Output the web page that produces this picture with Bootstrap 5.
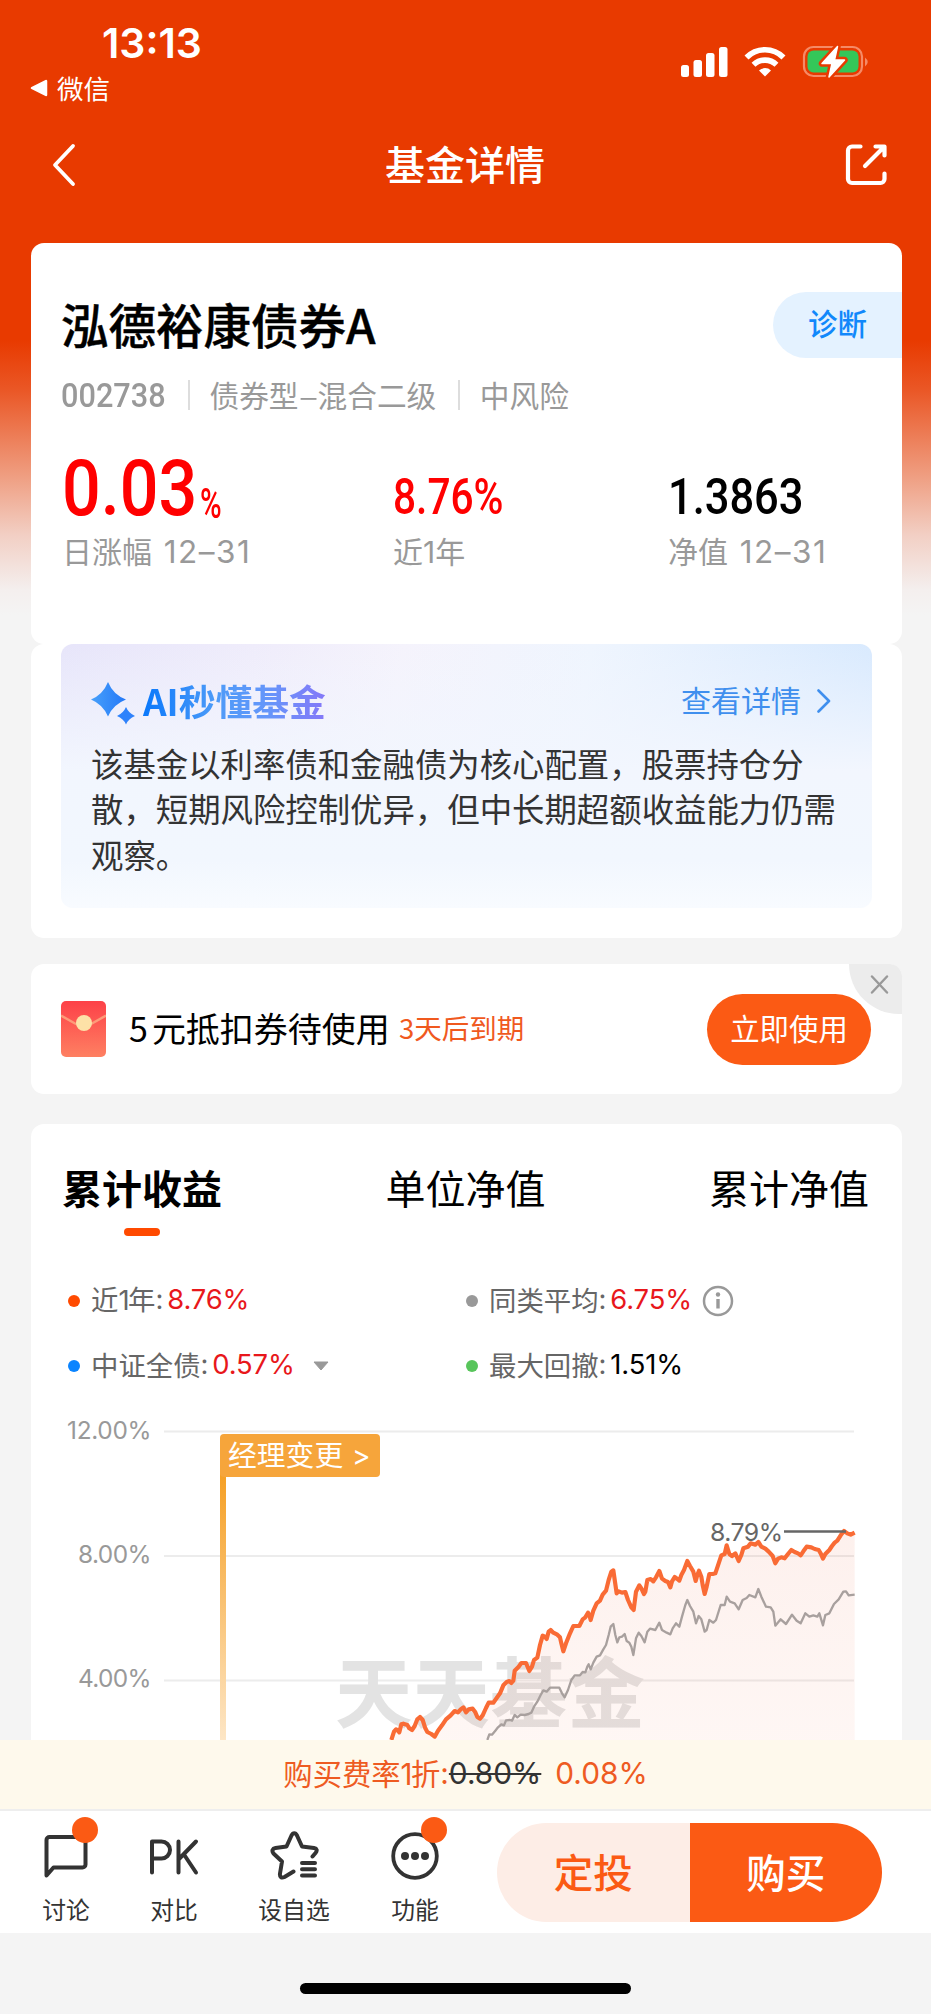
<!DOCTYPE html>
<html lang="zh-CN">
<head>
<meta charset="utf-8">
<meta name="viewport" content="width=device-width, initial-scale=1">
<title>基金详情</title>
<link href="https://cdn.jsdelivr.net/npm/bootstrap@5.3.0/dist/css/bootstrap.min.css" rel="stylesheet">
<style>
body{font-family:"Noto Sans CJK SC",sans-serif;background:#f4f4f4;color:#000;line-height:1;width:931px;height:2014px;overflow:hidden}
svg{display:block;flex:none}
.page{height:2014px;background:linear-gradient(#e83a00 0,#e83a00 340px,#ea5726 390px,#ef9d80 475px,#f2cfc4 535px,#f4efee 590px,#f4f4f4 615px)}
.num{font-family:Inter,"Noto Sans CJK SC",sans-serif}
.din{font-family:Roboto,sans-serif;display:inline-block;transform-origin:0 50%;white-space:nowrap}
.nw{white-space:nowrap}
.statusbar{height:114px;padding:21px 63px 0 30px}
.clock{font-size:41px;font-weight:600;margin-left:72px;line-height:44px}
.back-app{font-size:26.5px;gap:9px;margin-top:10px}
.status-icons{margin-top:24px}
.titlebar{height:129px;padding:0 43px 28px 52px}
.titlebar h1{font-size:40px;font-weight:500;line-height:1;margin:0 0 4px 9px}
.panel{background:#fff;border-radius:13px;margin:0 29px 0 31px;width:871px}
.summary{height:401px;padding-top:49px}
.fund-head{height:66px;padding-left:30px}
.fund-head h2{font-size:47.5px;font-weight:500;line-height:1;margin:0 0 3px;-webkit-text-stroke:.4px #000}
.diag{width:129px;height:66px;padding-bottom:5px;border-radius:33px 0 0 33px;background:#e4f2ff;color:#1188fb;font-size:29.5px;font-weight:500}
.meta{height:32px;margin-top:22px;padding:0 0 2px 30px;color:#999;font-size:29.7px}
.meta i{width:1.5px;height:30px;background:#ddd}
.code{width:127px}.code span{font-size:33px;font-weight:500;transform:scaleX(.93)}
.meta .kind{margin:0 22px 0 20px}
.meta .wide{display:inline-block;width:19px;text-align:center;transform:scaleX(1.2)}
.quotes{color:#999;font-size:30px;padding:43px 0 0 31px}
.quotes .value{height:66px}
.quotes .label{line-height:30px;margin-top:14px}
.red{color:#f00}
.q1{font-size:77.5px;font-weight:500;transform:scaleX(.88);line-height:68px;width:138px}
.q2{font-size:42px;font-weight:500;transform:scaleX(.7);vertical-align:-3px}
.q3,.q4{font-size:50.5px;font-weight:500;line-height:50px;padding-top:17px}
.q3{transform:scaleX(.805)}.q4{transform:scaleX(.86)}
.thin{font-size:31.5px;letter-spacing:1.5px;margin-left:5px}
.ai-wrap{height:294px;padding:0 30px}
.ai-box{height:264px;border-radius:12px;padding:0 30px;background:linear-gradient(rgba(255,255,255,0) 0,#f2f6fe 48%,#f2f7fe 82%,#f8fbff 100%),linear-gradient(100deg,#e7e5fa 0,#f0edfb 25%,#f5f3fc 40%,#eff5fe 62%,#d5e8fe 100%)}
.ai-head{height:118px;padding-bottom:5px}
.ai-head .spark{margin-top:4px}
.ai-name{font-size:36.8px;font-weight:700;background:linear-gradient(90deg,#0a78fb,#4d9bf8 40%,#6596fa 68%,#8578f8);-webkit-background-clip:text;background-clip:text;color:transparent;line-height:1.3}
.ai-link{color:#3f8fee;font-size:30px}
.ai-link span{margin:0 16px 3px 0}
.ai-text{font-size:32.4px;line-height:45.4px;color:#333;margin:-22px -4px 0 0}
.coupon{height:130px;margin-top:26px;padding:0 31px 0 30px}
.coupon .main-text{font-size:34px;margin:0 0 3px 23px}
.coupon .due{font-size:27.5px;color:#f0591e;margin:0 0 2px 9px}
.use-btn{width:164px;height:71px;border-radius:36px;background:#fb5a14;color:#fff;font-size:29.4px;padding-bottom:2px}
.shut{top:0;right:0;width:53px;height:50px;background:#ececec;border-radius:0 13px 0 52px;padding:0 0 9px 8px}
.chart-card{height:616px;margin-top:30px;border-radius:13px 13px 0 0}
.tabs{padding:0 33px 0 31px;height:112px;font-size:40px}
.tabs>div{padding-top:43px}
.tabs .sel{font-weight:700}
.tabs .sel:after{content:"";display:block;width:36px;height:8px;border-radius:4px;background:#ff4a00;margin:21px auto 0}
.legend-grid{height:130px;margin-top:32px;font-size:27.4px;color:#666}
.legend-grid .cell{height:65px;padding-left:37px;white-space:nowrap}
.legend-grid .cell span{margin-bottom:2px}
.legend-grid .cell.first{width:398px}
.dot{width:12px;height:12px;border-radius:50%;margin-right:11px}
.legend-grid .num{font-size:27.4px;letter-spacing:-.15px}
.legend-grid .up{color:#e8171b}
.legend-grid .val{margin-left:4px}
.one{font-family:Inter,sans-serif;letter-spacing:-1.5px}
.chart{margin-top:2px}
.fee{height:71px;padding-bottom:1px;background:#fef9ec;border-bottom:2px solid #eee;color:#ee5b22;font-size:29.3px}
.fee .num{font-size:29.8px}
.toolbar{height:122px;background:#fff;color:#333;font-size:23.8px}
.tool{width:80px;padding-top:19px}
.tool span{margin-top:17px;line-height:24px;white-space:nowrap}
.pip{width:26px;height:26px;border-radius:50%;background:#fb5a14}
.act{width:192.5px;height:99px;padding-bottom:4px;font-size:39.5px;font-weight:500;margin-top:12px}
.act.plan{background:#fdede6;color:#fb5a14;border-radius:50px 0 0 50px}
.act.buy{background:#fb5a14;color:#fff;border-radius:0 50px 50px 0}
.home{width:331px;height:11px;border-radius:6px;background:#000;margin:50px auto 0}
</style>
</head>
<body>
<div class="page d-flex flex-column">
  <header class="text-white">
    <div class="statusbar d-flex justify-content-between">
      <div>
        <div class="clock num">13:13</div>
        <div class="back-app d-flex align-items-center">
          <svg width="18" height="18" viewBox="0 0 18 18"><path d="M16 2v14L2 9z" fill="#fff" stroke="#fff" stroke-width="2.5" stroke-linejoin="round"/></svg>
          <span>微信</span>
        </div>
      </div>
      <svg class="status-icons" width="188" height="34" viewBox="680 45 188 34">
        <g fill="#fff"><rect x="681" y="65" width="8" height="12" rx="2.5"/><rect x="693.5" y="60" width="8.5" height="17" rx="2.5"/><rect x="706" y="53" width="8.5" height="24" rx="2.5"/><rect x="719" y="47" width="8.5" height="30" rx="2.5"/></g>
        <g fill="none" stroke="#fff" stroke-width="5.6"><path d="M746.500 57.500a26 26 0 0 1 37 0"/><path d="M753.500 64.800a16.500 16.500 0 0 1 23 0"/></g><path d="M765 76.500l-6-6a8.700 8.700 0 0 1 12 0z" fill="#fff"/>
        <rect x="804" y="47" width="58" height="29" rx="9.5" fill="none" stroke="#f58a66" stroke-width="2.2"/><rect x="807.5" y="50.5" width="51" height="22" rx="6" fill="#34c759"/><path d="M865 57.500q5.500 4.500 0 9z" fill="#f58a66"/>
        <path d="M837.500 46.500L822 63.500h10L829 77l15.500-17h-10z" fill="#fff" stroke="#e83a00" stroke-width="6.500" stroke-linejoin="round"/><path d="M837.500 46.500L822 63.500h10L829 77l15.500-17h-10z" fill="#fff" stroke="#fff" stroke-width="1.500" stroke-linejoin="round"/>
      </svg>
    </div>
    <div class="titlebar d-flex align-items-center justify-content-between">
      <svg width="24" height="44" viewBox="0 0 24 44" fill="none" stroke="#fff" stroke-width="3.8" stroke-linecap="round" stroke-linejoin="round"><path d="M21 3L3 22l18 19"/></svg>
      <h1>基金详情</h1>
      <svg width="43" height="43" viewBox="0 0 43 43" fill="none" stroke="#fff" stroke-width="4.2" stroke-linecap="round" stroke-linejoin="round"><path d="M15.500 3.500H7a4 4 0 0 0-4 4v28.500a4 4 0 0 0 4 4h28.500a4 4 0 0 0 4-4v-5.500M30.500 3.500h9v9M38.500 4.500L20 23"/></svg>
    </div>
  </header>

  <section class="panel summary">
    <div class="fund-head d-flex align-items-center justify-content-between">
      <h2>泓德裕康债券A</h2>
      <div class="diag d-flex align-items-center justify-content-center">诊断</div>
    </div>
    <div class="meta d-flex align-items-center nw">
      <div class="code"><span class="din">002738</span></div><i></i>
      <span class="kind">债券型<span class="wide">–</span>混合二级</span><i></i><span style="margin-left:20px">中风险</span>
    </div>
    <div class="quotes d-flex nw">
      <div style="width:331px"><div class="value red"><span class="din q1">0.03</span><span class="din q2">%</span></div><div class="label">日涨幅 <span class="num thin">12–31</span></div></div>
      <div style="width:275px"><div class="value red"><span class="din q3">8.76%</span></div><div class="label">近<span class="num">1</span>年</div></div>
      <div><div class="value text-black"><span class="din q4">1.3863</span></div><div class="label">净值 <span class="num thin">12–31</span></div></div>
    </div>
  </section>

  <section class="panel ai-wrap">
    <div class="ai-box">
      <div class="ai-head d-flex align-items-center justify-content-between nw">
        <div class="d-flex align-items-center">
          <svg class="spark" width="52" height="46" viewBox="0 0 52 46"><defs><linearGradient id="sp"><stop stop-color="#47a0fb"/><stop offset="1" stop-color="#2478f7"/></linearGradient></defs><path d="M17 2q5 12.500 18 17.500Q22 24.500 17 36.500 12 24.500 0 19.500 12 14.500 17 2z" fill="url(#sp)"/><path d="M35 27q2.500 6 9 9-6.500 2.500-9 8.500-2.500-6-9-8.500 6.500-3 9-9z" fill="#2f82fb"/></svg>
          <span class="ai-name">AI秒懂基金</span>
        </div>
        <div class="ai-link d-flex align-items-center"><span>查看详情</span><svg width="25" height="26" viewBox="0 0 25 26" fill="none" stroke="#3f8fee" stroke-width="2.6" stroke-linecap="round" stroke-linejoin="round"><path d="M1.500 2.500L12 13 1.500 23.500"/></svg></div>
      </div>
      <p class="ai-text">该基金以利率债和金融债为核心配置，股票持仓分散，短期风险控制优异，但中长期超额收益能力仍需观察。</p>
    </div>
  </section>

  <section class="panel coupon d-flex align-items-center position-relative nw">
    <svg width="45" height="56" viewBox="0 0 45 56"><defs><linearGradient id="env" x2="0" y2="1"><stop stop-color="#fd4148"/><stop offset="1" stop-color="#fe8062"/></linearGradient></defs><rect width="45" height="56" rx="5" fill="url(#env)"/><path d="M0 14.500L14 22.500Q23 27 31 22.500L45 14.500" fill="none" stroke="#fd9b79" stroke-width="2.4"/><circle cx="23" cy="22" r="8" fill="#fde1a7"/></svg>
    <span class="main-text">5<span class="ms-1">元抵扣券待使用</span></span><span class="due">3天后到期</span>
    <div class="use-btn ms-auto d-flex align-items-center justify-content-center">立即使用</div>
    <div class="shut position-absolute d-flex align-items-center justify-content-center"><svg width="19" height="19" viewBox="0 0 19 19" stroke="#999" stroke-width="2.4" stroke-linecap="round"><path d="M2 1.500l15 16M17 1.500l-15 16"/></svg></div>
  </section>

  <section class="panel chart-card">
    <div class="tabs d-flex justify-content-between nw"><div class="sel">累计收益</div><div>单位净值</div><div>累计净值</div></div>
    <div class="legend-grid d-flex flex-wrap">
      <div class="cell first d-flex align-items-center"><i class="dot" style="background:#ff4a00"></i><span>近<b class="one fw-normal">1</b>年</span><span class="num">:</span><span class="num val up">8.76%</span></div>
      <div class="cell d-flex align-items-center"><i class="dot" style="background:#999"></i><span>同类平均</span><span class="num">:</span><span class="num val up">6.75%</span>
        <svg style="margin-left:10px" width="34" height="32" viewBox="0 0 34 32"><circle cx="16" cy="16" r="14" fill="none" stroke="#999" stroke-width="2.5"/><circle cx="16" cy="9.500" r="2.2" fill="#999"/><path d="M16 14v9.500" stroke="#999" stroke-width="3.400"/></svg></div>
      <div class="cell first d-flex align-items-center"><i class="dot" style="background:#0a84ff"></i><span>中证全债</span><span class="num">:</span><span class="num val up">0.57%</span>
        <svg style="margin-left:18px" width="16" height="10" viewBox="0 0 16 10"><path d="M1 1h14L8 9z" fill="#999" stroke="#999" stroke-linejoin="round"/></svg></div>
      <div class="cell d-flex align-items-center"><i class="dot" style="background:#58c55b"></i><span>最大回撤</span><span class="num">:</span><span class="num val text-black">1.51%</span></div>
    </div>
    <svg class="chart" width="871" height="340" viewBox="31 1400 871 340">
      <defs>
        <linearGradient id="pole" x2="0" y2="1"><stop stop-color="#f59c1c"/><stop offset="1" stop-color="#fde6c6"/></linearGradient>
        <linearGradient id="area" x2="0" y2="1"><stop stop-color="#e8562f" stop-opacity=".085"/><stop offset="1" stop-color="#f0562a" stop-opacity=".05"/></linearGradient>
      </defs>
      <path d="M164 1431.500H854M164 1556H854M164 1680.500H854" stroke="#ececec" stroke-width="2"/>
      <g font-family="Inter,sans-serif" font-size="24.4" fill="#999" text-anchor="end"><text x="151.500" y="1438.500" textLength="84.500">12.00%</text><text x="151.500" y="1562.500" textLength="73.500">8.00%</text><text x="151.500" y="1687" textLength="73.500">4.00%</text></g>
      <text x="335" y="1721.500" font-family="Noto Sans CJK SC,sans-serif" font-weight="700" font-size="77.5" fill="#e3e3e3">天天基金</text>
      <g transform="translate(320 1480) scale(.333333)" fill="none" stroke-linejoin="round">
        <path id="fill-area" fill="url(#area)"/>
        <path id="avg" stroke="#a8a09e" stroke-width="7"/>
        <path id="fund" stroke="#f96b35" stroke-width="12.500"/>
      </g>
      <path d="M220 1460h6V1740h-6z" fill="url(#pole)"/>
      <rect x="220" y="1434" width="160" height="43" rx="4" fill="#f6a53b"/>
      <text x="228" y="1466" font-family="Noto Sans CJK SC,sans-serif" font-size="28.8" fill="#fff">经理变更</text>
      <text x="352" y="1465.500" font-family="Inter,sans-serif" font-size="28" fill="#fff">&gt;</text>
      <text x="710" y="1540.500" font-family="Inter,sans-serif" font-size="24.8" fill="#666" textLength="73">8.79%</text>
      <path d="M784 1531.500h62" stroke="#666" stroke-width="2.500"/>
    </svg>
  </section>

  <div class="fee d-flex align-items-center justify-content-center nw"><span>购买费率<span class="one">1</span>折</span><span class="num">:</span><s class="num" style="color:#333">0.80%</s><span class="num" style="margin-left:14px">0.08%</span></div>

  <nav class="toolbar d-flex">
    <div class="tool d-flex flex-column align-items-center position-relative" style="margin-left:26px">
      <svg width="46" height="50" viewBox="43.500 1829.500 46 50" fill="none" stroke="#333" stroke-width="4" stroke-linejoin="round"><path d="M47 1875V1839.500a3 3 0 0 1 3-3h33a3 3 0 0 1 3 3V1864a3 3 0 0 1-3 3H54z"/></svg><span>讨论</span>
      <i class="pip position-absolute" style="left:46px;top:6px"></i>
    </div>
    <div class="tool d-flex flex-column align-items-center" style="margin-left:28px">
      <svg width="52" height="50" viewBox="148 1830.500 52 50" fill="none" stroke="#333" stroke-width="4" stroke-linecap="round" stroke-linejoin="round"><path d="M152 1873v-31h9.500a8.500 8.500 0 0 1 0 17H152M178.500 1842v31M196 1842l-17.500 18M184 1855l12 18"/></svg><span>对比</span>
    </div>
    <div class="tool d-flex flex-column align-items-center" style="margin-left:40px">
      <svg width="52" height="50" viewBox="269 1830 52 50" fill="none" stroke="#333" stroke-width="4" stroke-linecap="round" stroke-linejoin="round"><path d="M313.500 1856.500l3-3.500c2-2.500 1.500-4.500-1.500-5l-12-1.500-5-11c-1.500-3-4-3-5.500 0l-5 11-11 1.500c-3 .5-4 3-2 5.500l8.500 8-2 12c-.5 3.500 1.500 5 4.500 3.500l9-5.500"/><path d="M303 1863h13M303 1869.300h13M303 1875.600h13"/></svg><span>设自选</span>
    </div>
    <div class="tool d-flex flex-column align-items-center position-relative" style="margin-left:41px">
      <svg width="50" height="50" viewBox="390 1831 50 50"><circle cx="415" cy="1857" r="21.8" fill="none" stroke="#333" stroke-width="3.8"/><g fill="#333"><circle cx="405" cy="1857" r="4"/><circle cx="415" cy="1857" r="4"/><circle cx="425" cy="1857" r="4"/></g></svg><span>功能</span>
      <i class="pip position-absolute" style="left:46px;top:6px"></i>
    </div>
    <div class="act plan d-flex align-items-center justify-content-center" style="margin-left:42px">定投</div>
    <div class="act buy d-flex align-items-center justify-content-center">购买</div>
  </nav>
  <div class="home"></div>
</div>
<script src="https://cdn.jsdelivr.net/npm/bootstrap@5.3.0/dist/js/bootstrap.bundle.min.js"></script>
<script>
const fund="214,780 222,755 228,748 234,752 238,757 244,733 250,731 262,735 268,745 276,750 284,738 292,718 300,711 308,720 316,745 322,756 334,762 344,770 354,752 366,736 378,718 392,706 404,693 414,697 422,688 430,682 438,697 446,688 458,686 466,697 472,711 480,716 488,706 498,684 506,668 520,668 530,654 540,640 550,616 560,606 568,603 574,609 580,602 584,572 596,560 604,549 618,549 628,573 636,560 642,540 652,533 660,495 668,467 674,470 680,477 686,455 692,450 700,458 712,464 720,472 724,490 730,514 738,490 750,460 760,438 778,438 788,418 796,412 804,398 808,405 812,420 820,392 830,370 840,362 848,344 858,332 866,300 874,275 880,271 890,340 896,334 906,338 916,336 924,360 934,382 941,390 948,335 958,316 964,325 972,342 976,335 982,300 992,297 1000,304 1008,292 1018,273 1026,296 1036,303 1044,306 1051,322 1056,304 1064,291 1072,297 1078,302 1084,285 1092,270 1102,243 1110,258 1120,275 1127,303 1132,285 1137,272 1144,290 1148,315 1154,342 1160,320 1168,282 1178,282 1186,280 1196,250 1204,226 1214,222 1220,196 1228,222 1236,228 1246,220 1256,243 1264,225 1270,205 1284,200 1292,190 1306,194 1315,186 1324,200 1336,206 1346,215 1358,228 1366,250 1374,236 1384,232 1394,235 1404,222 1414,210 1424,216 1434,220 1442,226 1450,214 1460,200 1474,202 1484,207 1496,210 1502,220 1509,236 1516,222 1528,210 1536,198 1544,188 1552,182 1562,166 1572,153 1582,160 1592,164 1604,158";
const avg="502,780 508,763 516,764 526,752 534,742 544,733 552,736 558,721 570,720 576,722 584,705 592,712 602,704 614,705 626,702 634,698 642,680 652,665 662,645 670,631 680,635 690,623 718,623 726,640 734,652 744,630 754,600 764,586 780,586 788,576 796,577 802,560 806,553 812,568 820,548 830,530 840,526 850,508 858,495 866,465 872,440 880,432 886,465 892,487 898,472 906,470 914,462 920,483 928,488 934,500 940,525 948,475 956,458 964,468 974,487 982,455 990,446 1006,450 1018,428 1026,450 1040,458 1051,463 1058,445 1068,430 1078,440 1086,410 1096,375 1102,360 1110,378 1120,395 1128,430 1136,408 1144,418 1154,455 1160,450 1168,420 1180,428 1188,420 1202,375 1214,375 1220,350 1230,365 1244,370 1256,388 1268,360 1280,354 1288,345 1306,352 1315,327 1324,350 1338,380 1352,382 1360,395 1366,437 1382,418 1398,432 1416,404 1430,422 1442,430 1456,400 1468,410 1480,406 1492,410 1498,400 1509,436 1516,405 1528,400 1542,372 1556,358 1570,335 1578,334 1586,346 1604,344";
document.getElementById("fund").setAttribute("d","M"+fund);
document.getElementById("avg").setAttribute("d","M"+avg);
document.getElementById("fill-area").setAttribute("d","M"+fund+" 1604,780Z");
</script>
</body>
</html>
